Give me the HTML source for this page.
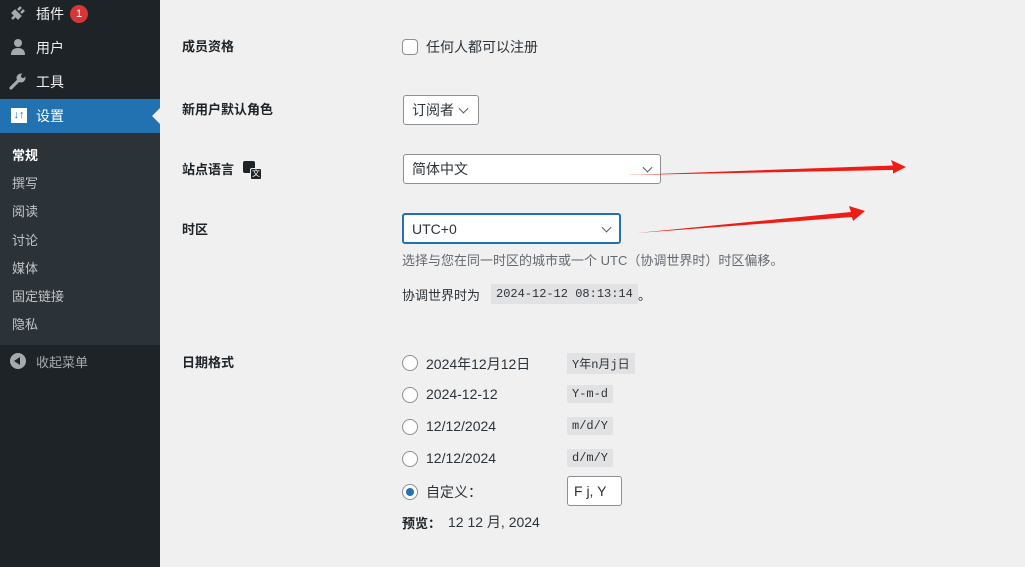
<!DOCTYPE html>
<html><head><meta charset="utf-8"><style>
*{box-sizing:border-box;margin:0;padding:0}
body{width:1025px;height:567px;overflow:hidden;background:#f0f0f1;font-family:"Liberation Sans","Noto Sans CJK SC",sans-serif;font-size:13px;color:#1d2327;position:relative}
.sb{position:absolute;left:0;top:0;width:160px;height:567px;background:#1d2327}
.a{position:absolute;white-space:nowrap}
.mi{left:36px;color:#f0f0f1;font-size:14px}
.sub{position:absolute;left:0;top:133px;width:160px;height:212px;background:#2c3338}
.si{left:12px;color:#c3c4c7;font-size:13px}
.lbl{left:182px;font-weight:bold;font-size:13px;color:#1d2327}
.sel{position:absolute;background:#fff;border:1px solid #8c8f94;border-radius:3px;font-size:14px;color:#2c3338;padding-left:8px;display:flex;align-items:center}
.chev{position:absolute;right:9px;top:50%;width:7px;height:7px;border-right:1.6px solid #50575e;border-bottom:1.6px solid #50575e;transform:translateY(-70%) rotate(45deg)}
.radio{position:absolute;left:402px;width:16px;height:16px;border:1px solid #8c8f94;border-radius:50%;background:#fff}
.rt{left:426px;font-size:14px;color:#2c3338}
.code{position:absolute;left:567px;background:#e2e2e4;font-family:"Liberation Mono","Noto Sans CJK SC",monospace;font-size:12px;padding:2px 5px;color:#2c3338}
</style></head><body>
<div class="sb">
<div class="sub"></div>
<div style="position:absolute;left:0;top:99px;width:160px;height:34px;background:#2271b1"></div>
<div style="position:absolute;left:152px;top:108px;width:0;height:0;border-top:8px solid transparent;border-bottom:8px solid transparent;border-right:8px solid #f0f0f1"></div>
<svg class="a" style="left:9px;top:4px" width="18" height="18" viewBox="0 0 18 18"><path d="M3 15 L7 11 M6 7 L11 12 L9 14 L4 9Z M9 6 L12 3 M12 9 L15 6" stroke="#a7aaad" stroke-width="2.6" fill="#a7aaad"/></svg>
<div class="a mi" style="top:4px">插件</div>
<div class="a" style="left:70px;top:5px;width:18px;height:18px;border-radius:9px;background:#d63638;color:#fff;font-size:11px;text-align:center;line-height:18px">1</div>
<svg class="a" style="left:9px;top:38px" width="18" height="18" viewBox="0 0 18 18"><circle cx="9" cy="5" r="4" fill="#a7aaad"/><path d="M2 17 Q2 10 9 10 Q16 10 16 17Z" fill="#a7aaad"/></svg>
<div class="a mi" style="top:38px">用户</div>
<svg class="a" style="left:9px;top:72px" width="18" height="18" viewBox="0 0 18 18"><path d="M2 16 L9 9" stroke="#a7aaad" stroke-width="3.2" stroke-linecap="round"/><circle cx="12" cy="6" r="4.5" fill="#a7aaad"/><circle cx="14" cy="4" r="2" fill="#1d2327"/></svg>
<div class="a mi" style="top:72px">工具</div>
<div class="a" style="left:11px;top:108px;width:16px;height:15px;background:#fff;color:#2271b1;font-size:11px;font-weight:bold;text-align:center;line-height:15px">↓↑</div>
<div class="a mi" style="top:106px;color:#fff">设置</div>
<div class="a si" style="top:145px;color:#fff;font-weight:bold">常规</div>
<div class="a si" style="top:173px">撰写</div>
<div class="a si" style="top:201px">阅读</div>
<div class="a si" style="top:230px">讨论</div>
<div class="a si" style="top:258px">媒体</div>
<div class="a si" style="top:286px">固定链接</div>
<div class="a si" style="top:314px">隐私</div>
<div class="a" style="left:10px;top:353px;width:16px;height:16px;border-radius:8px;background:#a7aaad"></div>
<div class="a" style="left:14px;top:357px;width:0;height:0;border-top:4px solid transparent;border-bottom:4px solid transparent;border-right:6px solid #1d2327"></div>
<div class="a" style="left:36px;top:352px;color:#a7aaad;font-size:13px">收起菜单</div>
</div>

<div class="a lbl" style="top:36px">成员资格</div>
<div class="a" style="left:402px;top:39px;width:16px;height:16px;border:1px solid #8c8f94;border-radius:4px;background:#fff"></div>
<div class="a rt" style="top:37px">任何人都可以注册</div>

<div class="a lbl" style="top:99px">新用户默认角色</div>
<div class="sel" style="left:403px;top:95px;width:76px;height:30px">订阅者<span class="chev" style="right:11px"></span></div>

<div class="a lbl" style="top:159px">站点语言</div>
<div class="a" style="left:243px;top:161px;width:12px;height:12px;background:#1d2327;border-radius:2px"></div>
<div class="a" style="left:250px;top:168px;width:12px;height:12px;background:#1d2327;border:1px solid #f0f0f1;border-radius:2px;color:#fff;font-size:8px;text-align:center;line-height:10px">文</div>
<div class="sel" style="left:403px;top:154px;width:258px;height:30px">简体中文<span class="chev"></span></div>

<div class="a lbl" style="top:219px">时区</div>
<div class="sel" style="left:402px;top:213px;width:219px;height:31px;border:2px solid #2271b1">UTC+0<span class="chev"></span></div>
<div class="a" style="left:402px;top:250px;color:#646970;font-size:13px">选择与您在同一时区的城市或一个 UTC（协调世界时）时区偏移。</div>
<div class="a" style="left:402px;top:285px;font-size:13px;color:#2c3338">协调世界时为</div>
<div class="code" style="left:491px;top:284px;padding:3px 5px">2024-12-12 08:13:14</div>
<div class="a" style="left:638px;top:285px">。</div>

<div class="a lbl" style="top:352px">日期格式</div>
<div class="radio" style="top:355px"></div><div class="a rt" style="top:354px">2024年12月12日</div><div class="code" style="top:353px">Y年n月j日</div>
<div class="radio" style="top:387px"></div><div class="a rt" style="top:386px">2024-12-12</div><div class="code" style="top:385px">Y-m-d</div>
<div class="radio" style="top:419px"></div><div class="a rt" style="top:418px">12/12/2024</div><div class="code" style="top:417px">m/d/Y</div>
<div class="radio" style="top:451px"></div><div class="a rt" style="top:450px">12/12/2024</div><div class="code" style="top:449px">d/m/Y</div>
<div class="radio" style="top:484px"></div><div class="a" style="left:406px;top:488px;width:8px;height:8px;border-radius:4px;background:#2271b1"></div><div class="a rt" style="top:482px">自定义：</div>
<div class="sel" style="left:567px;top:476px;width:55px;height:30px;padding-left:6px">F j, Y</div>
<div class="a" style="left:402px;top:513px;font-weight:bold">预览：</div><div class="a rt" style="left:448px;top:512px">12 12 月, 2024</div>

<svg class="a" style="left:0;top:0" width="1025" height="567">
<path d="M627 175 L893 165.5 L891 160 L906 167 L893 173.5 L893 170Z" fill="#ee1c14"/>
<path d="M637 233 L851 212 L849 206 L865 211 L853 221 L852 217Z" fill="#ee1c14"/>
</svg>
</body></html>
